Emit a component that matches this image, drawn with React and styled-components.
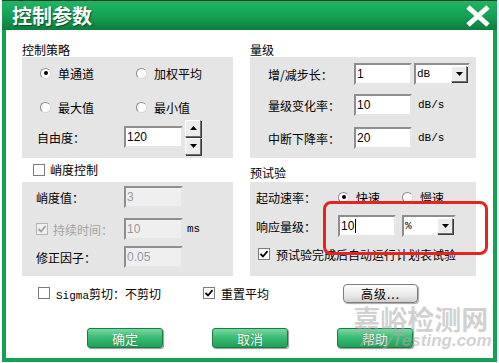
import React from "react";
import styled, { createGlobalStyle } from "styled-components";

const GlobalStyle = createGlobalStyle`
  body {
    margin: 0;
    background: #ffffff;
    font-family: "Noto Sans CJK SC", "Noto Sans", sans-serif;
  }
`;

const cjk = `"Noto Sans CJK SC", "Noto Sans", sans-serif`;

const Window = styled.div`
  position: relative;
  margin-left: 2px;
  width: 495px;
  height: 362px;
  display: flex;
  flex-direction: column;
  box-sizing: border-box;
`;

const TitleBar = styled.div`
  height: 30px;
  flex: none;
  display: flex;
  align-items: center;
  justify-content: space-between;
  padding: 0 6px 0 10px;
  box-sizing: border-box;
  border-top: 1px solid #1d3b26;
  background: linear-gradient(#21b463, #15a155 50%, #0c7d3d);
`;

const Title = styled.div`
  color: #ffffff;
  font-family: ${cjk};
  font-weight: 700;
  font-size: 20px;
  letter-spacing: 0px;
  text-shadow: 1px 1px 1px rgba(0, 50, 20, 0.7);
  line-height: 28px;
`;

const Body = styled.div`
  flex: 1;
  background: #ffffff;
  border: 4px solid #15a052;
  border-top: none;
  padding: 12px 17px 0 16px;
  display: flex;
  flex-direction: column;
`;

const Columns = styled.div`
  display: grid;
  grid-template-columns: 211px 226px;
  column-gap: 17px;
`;

const Column = styled.div`
  display: flex;
  flex-direction: column;
`;

const Heading = styled.div`
  height: ${(p) => p.$h}px;
  display: flex;
  align-items: ${(p) => (p.$end ? "flex-end" : "center")};
  padding-left: ${(p) => p.$indent || 0}px;
  padding-bottom: ${(p) => (p.$end ? 2 : 0)}px;
  gap: 5px;
  font-size: 12px;
  color: #000;
  line-height: 14px;
  box-sizing: border-box;
`;

const Panel = styled.div`
  background: #e5e5e5;
  height: ${(p) => p.$h}px;
  padding-left: ${(p) => p.$pad}px;
  display: flex;
  flex-direction: column;
  box-sizing: border-box;
`;

const Row = styled.div`
  display: flex;
  align-items: center;
  height: ${(p) => p.$h || 22}px;
  margin-top: ${(p) => p.$mt || 0}px;
  font-size: 12px;
  color: #000;
`;

const Label = styled.span`
  width: ${(p) => p.$w}px;
  flex: none;
  font-size: 12px;
  color: ${(p) => (p.$disabled ? "#a3a3a3" : "#000")};
  white-space: nowrap;
`;

const Choice = styled.label`
  display: flex;
  align-items: center;
  gap: ${(p) => p.$gap || 6}px;
  width: ${(p) => (p.$w ? `${p.$w}px` : "auto")};
  flex: none;
  font-size: 12px;
  color: ${(p) => (p.$disabled ? "#a3a3a3" : "#000")};
  white-space: nowrap;
`;

const RadioCircle = styled.span`
  width: 11px;
  height: 11px;
  border-radius: 50%;
  box-sizing: border-box;
  background: #fff;
  border: 1px solid;
  border-color: #8a8a8a #d8d8d8 #d8d8d8 #8a8a8a;
  display: flex;
  align-items: center;
  justify-content: center;
  flex: none;
  &::after {
    content: "";
    width: 4px;
    height: 4px;
    border-radius: 50%;
    background: ${(p) => (p.$on ? "#000" : "transparent")};
  }
`;

const Box = styled.span`
  width: 12px;
  height: 12px;
  box-sizing: border-box;
  background: ${(p) => (p.$disabled ? "#efefef" : "#fff")};
  border: 1px solid ${(p) => (p.$disabled ? "#b4b4b4" : "#7c7c7c")};
  display: flex;
  align-items: center;
  justify-content: center;
  flex: none;
`;

const Field = styled.div`
  width: ${(p) => p.$w}px;
  height: ${(p) => p.$h || 22}px;
  box-sizing: border-box;
  border: 2px solid;
  border-color: #8e8e8e #e6e6e6 #e6e6e6 #8e8e8e;
  background: ${(p) => (p.$disabled ? "#efefef" : "#fff")};
  color: ${(p) => (p.$disabled ? "#9a9a9a" : "#000")};
  font-family: "Liberation Sans", Arial, sans-serif;
  font-size: 12px;
  display: flex;
  align-items: center;
  padding-left: 1px;
  flex: none;
`;

const Caret = styled.span`
  width: 1px;
  height: 14px;
  background: #000;
  margin-left: 1px;
`;

const Unit = styled.span`
  font-family: "Liberation Mono", "DejaVu Sans Mono", monospace;
  font-size: 11px;
  color: #000;
  margin-left: ${(p) => p.$ml || 4}px;
`;

const SelectBox = styled(Field)`
  margin-left: ${(p) => p.$ml}px;
  justify-content: space-between;
  padding-right: 1px;
  font-family: "Liberation Mono", monospace;
  font-size: 11px;
`;

const RaisedBtn = styled.span`
  width: ${(p) => p.$w || 16}px;
  height: ${(p) => p.$h || 16}px;
  box-sizing: border-box;
  background: #ececec;
  border: 1px solid;
  border-color: #ffffff #6e6e6e #6e6e6e #ffffff;
  box-shadow: 1px 1px 0 #3a3a3a;
  display: flex;
  align-items: center;
  justify-content: center;
  flex: none;
`;

const Spin = styled.div`
  display: flex;
  flex-direction: column;
  gap: 1px;
  margin-left: 2px;
`;

const Options = styled.div`
  display: flex;
  align-items: center;
  height: 20px;
  margin-top: 7px;
  padding-left: 16px;
`;

const Mono = styled.span`
  font-family: "Liberation Mono", monospace;
  font-size: 11px;
`;

const GrayButton = styled.div`
  width: 75px;
  height: 19px;
  box-sizing: border-box;
  border: 1px solid #7d7d7d;
  border-radius: 4px;
  background: linear-gradient(#fdfdfd, #e9e9e9 60%, #cfcfcf);
  box-shadow: 1px 1px 1px rgba(0, 0, 0, 0.35);
  font-size: 12px;
  display: flex;
  align-items: center;
  justify-content: center;
  letter-spacing: 1px;
`;

const Buttons = styled.div`
  display: flex;
  gap: ${(p) => p.$gap}px;
  margin-top: 25px;
  padding-left: 65px;
`;

const GreenButton = styled.div`
  width: 76px;
  height: 20px;
  box-sizing: border-box;
  border: 1px solid #1c7a45;
  border-radius: 3px;
  background: linear-gradient(#7cd8a2, #3cbd74 45%, #1f9f58);
  box-shadow: 1px 1px 1px rgba(0, 0, 0, 0.4);
  color: #ffffff;
  font-size: 13px;
  display: flex;
  align-items: center;
  justify-content: center;
  text-shadow: 0 0 1px rgba(0, 60, 20, 0.6);
`;

const Highlight = styled.div`
  position: absolute;
  left: 321px;
  top: 201px;
  width: 165px;
  height: 54px;
  box-sizing: border-box;
  border: 3px solid #e5231f;
  border-radius: 8px;
  pointer-events: none;
`;

const Watermark = styled.div`
  position: absolute;
  left: 348px;
  top: 303px;
  display: flex;
  flex-direction: column;
  align-items: center;
  color: rgba(170, 170, 170, 0.55);
  pointer-events: none;
`;

const WmCn = styled.div`
  font-family: ${cjk};
  font-weight: 700;
  font-size: 27px;
  line-height: 32px;
`;

const WmEn = styled.div`
  font-family: "Liberation Sans", Arial, sans-serif;
  font-weight: 700;
  font-style: italic;
  font-size: 17px;
  line-height: 20px;
  margin-top: -4px;
  margin-left: 10px;
`;

function Radio({ on, children, w, disabled }) {
  return (
    <Choice $w={w} $gap={7} $disabled={disabled}>
      <RadioCircle $on={on} />
      {children}
    </Choice>
  );
}

function Check({ on, disabled, children, w, gap }) {
  return (
    <Choice $w={w} $gap={gap || 6} $disabled={disabled}>
      <Box $disabled={disabled}>
        {on && (
          <svg width="10" height="10" viewBox="0 0 10 10">
            <path
              d="M1.5 5 L4 7.5 L8.5 2.2"
              fill="none"
              stroke={disabled ? "#a0a0a0" : "#000"}
              strokeWidth="1.8"
            />
          </svg>
        )}
      </Box>
      {children}
    </Choice>
  );
}

const Arrow = ({ up }) => (
  <svg width="7" height="4" viewBox="0 0 7 4">
    <path d={up ? "M0 4 L3.5 0 L7 4 Z" : "M0 0 L7 0 L3.5 4 Z"} fill="#000" />
  </svg>
);

function Select({ value, w, ml }) {
  return (
    <SelectBox $w={w} $ml={ml}>
      <span>{value}</span>
      <RaisedBtn $w={16} $h={16}>
        <Arrow />
      </RaisedBtn>
    </SelectBox>
  );
}

export default function App() {
  return (
    <>
      <GlobalStyle />
      <Window>
        <TitleBar>
          <Title>控制参数</Title>
          <svg width="26" height="22" viewBox="0 0 26 22">
            <path
              d="M3 2 L23 20 M23 2 L3 20"
              stroke="#ffffff"
              strokeWidth="5"
              strokeLinecap="butt"
            />
          </svg>
        </TitleBar>
        <Body>
          <Columns>
            <Column>
              <Heading $h={15}>控制策略</Heading>
              <Panel $h={101} $pad={18}>
                <Row $h={24} $mt={4}>
                  <Radio on w={96}>单通道</Radio>
                  <Radio>加权平均</Radio>
                </Row>
                <Row $h={24} $mt={10}>
                  <Radio w={96}>最大值</Radio>
                  <Radio>最小值</Radio>
                </Row>
                <Row $h={36} style={{ marginLeft: -3 }}>
                  <Label $w={87}>自由度：</Label>
                  <Field $w={59}>120</Field>
                  <Spin>
                    <RaisedBtn $w={16} $h={17}>
                      <Arrow up />
                    </RaisedBtn>
                    <RaisedBtn $w={16} $h={17}>
                      <Arrow />
                    </RaisedBtn>
                  </Spin>
                </Row>
              </Panel>
              <Heading $h={24} $indent={11}>
                <Check gap={5}>峭度控制</Check>
              </Heading>
              <Panel $h={94} $pad={14}>
                <Row $mt={4}>
                  <Label $w={88}>峭度值：</Label>
                  <Field $w={59} $disabled>
                    3
                  </Field>
                </Row>
                <Row $mt={10}>
                  <Check on disabled w={88} gap={5}>
                    持续时间：
                  </Check>
                  <Field $w={59} $disabled>
                    10
                  </Field>
                  <Unit $ml={4}>ms</Unit>
                </Row>
                <Row $mt={6}>
                  <Label $w={88}>修正因子：</Label>
                  <Field $w={59} $disabled>
                    0.05
                  </Field>
                </Row>
              </Panel>
            </Column>
            <Column>
              <Heading $h={15}>量级</Heading>
              <Panel $h={101} $pad={18}>
                <Row $mt={6}>
                  <Label $w={86}>增/减步长：</Label>
                  <Field $w={58}>1</Field>
                  <Select value="dB" w={56} ml={2} />
                </Row>
                <Row $mt={9}>
                  <Label $w={86}>量级变化率：</Label>
                  <Field $w={58}>10</Field>
                  <Unit $ml={6}>dB/s</Unit>
                </Row>
                <Row $mt={11}>
                  <Label $w={86}>中断下降率：</Label>
                  <Field $w={58}>20</Field>
                  <Unit $ml={6}>dB/s</Unit>
                </Row>
              </Panel>
              <Heading $h={24} $end>
                预试验
              </Heading>
              <Panel $h={94} $pad={6}>
                <Row $mt={4}>
                  <Label $w={82}>起动速率：</Label>
                  <Radio on w={64}>快速</Radio>
                  <Radio>慢速</Radio>
                </Row>
                <Row $mt={7}>
                  <Label $w={82}>响应量级：</Label>
                  <Field $w={58}>
                    10
                    <Caret />
                  </Field>
                  <Select value="%" w={54} ml={6} />
                </Row>
                <Row $h={16} $mt={9} style={{ marginLeft: 2 }}>
                  <Check on>预试验完成后自动运行计划表试验</Check>
                </Row>
              </Panel>
            </Column>
          </Columns>
          <Options>
            <Check w={165}>
              <span>
                <Mono>Sigma</Mono>剪切：不剪切
              </span>
            </Check>
            <Check on w={140}>
              重置平均
            </Check>
            <GrayButton>高级...</GrayButton>
          </Options>
          <Buttons $gap={49}>
            <GreenButton>确定</GreenButton>
            <GreenButton>取消</GreenButton>
            <GreenButton>帮助</GreenButton>
          </Buttons>
        </Body>
        <Highlight />
        <Watermark>
          <WmCn>嘉峪检测网</WmCn>
          <WmEn>AnyTesting.com</WmEn>
        </Watermark>
      </Window>
    </>
  );
}
